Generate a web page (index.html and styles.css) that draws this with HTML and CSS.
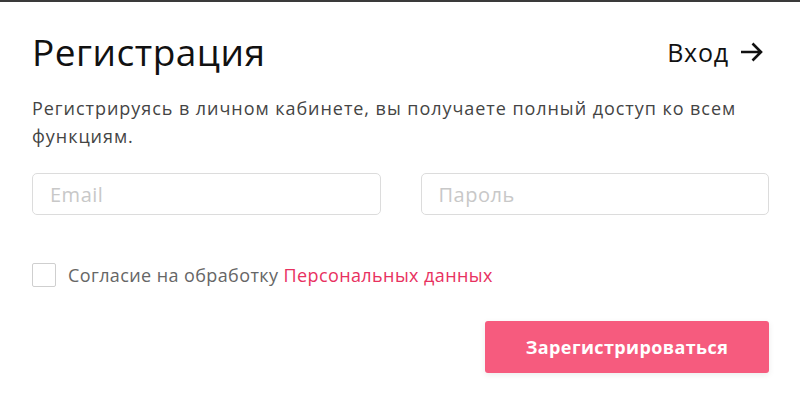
FILE: index.html
```html
<!DOCTYPE html>
<html lang="ru">
<head>
    <meta charset="UTF-8">
    <meta name="viewport" content="width=device-width, initial-scale=1.0">
    <title>Регистрация</title>
    <link rel="stylesheet" href="styles.css">
</head>
<body>
    <div class="modal">
        <div class="modal-head">
            <h1>Регистрация</h1>
            <a href="#" class="login-link">Вход
                <svg width="23" height="20" viewBox="0 0 23 20"><path d="M1 10H21M12.5 1.5L21 10L12.5 18.5" fill="none" stroke="#111" stroke-width="2.6"/></svg>
            </a>
        </div>

        <p class="lead">Регистрируясь в личном кабинете, вы получаете полный доступ ко всем функциям.</p>

        <div class="fields">
            <input type="text" class="field" placeholder="Email">
            <input type="password" class="field" placeholder="Пароль">
        </div>

        <label class="agree">
            <span class="box"></span>
            <span>Согласие на обработку <a href="#">Персональных данных</a></span>
        </label>

        <div class="actions">
            <button class="btn">Зарегистрироваться</button>
        </div>
    </div>
</body>
</html>
```

FILE: styles.css
```css
body { margin: 0; font-family: "Open Sans", "Noto Sans", sans-serif; background: #fff; }
.modal { border-top: 2px solid #3a3a3a; padding: 28px 31px 30px 32px; }
.modal-head { display: flex; justify-content: space-between; align-items: center; }
h1 { margin: 0; font-size: 37px; font-weight: 400; color: #111; line-height: 44px; letter-spacing: 0.5px; }
.login-link { display: flex; align-items: center; gap: 11px; color: #111; text-decoration: none; font-size: 25px; letter-spacing: 0.8px; margin-right: 6px; }
.lead { margin: 20px 0 0; font-size: 18px; line-height: 28px; color: #444; letter-spacing: 0.95px; max-width: 725px; }
.fields { display: flex; gap: 40px; margin-top: 23px; }
.field { flex: 1; height: 42px; box-sizing: border-box; border: 1px solid #dcdcdc; border-radius: 5px; padding: 0 17px; font-family: inherit; font-size: 20px; letter-spacing: 0.5px; outline: none; }
.field::placeholder { color: #c8c8c8; }
.agree { display: flex; align-items: center; gap: 12px; margin-top: 48px; font-size: 18px; line-height: 24px; letter-spacing: 0.4px; color: #666; }
.agree a { color: #e8315f; text-decoration: none; }
.box { width: 24px; height: 24px; box-sizing: border-box; border: 1px solid #cfcfcf; border-radius: 2px; }
.actions { display: flex; justify-content: flex-end; margin-top: 34px; }
.btn { width: 284px; height: 52px; border: none; border-radius: 3px; background: #f65b7e; color: #fff; font-family: inherit; font-size: 18px; font-weight: 700; letter-spacing: 0.4px; box-shadow: 0 2px 6px rgba(0, 0, 0, 0.08); cursor: pointer; }
```
